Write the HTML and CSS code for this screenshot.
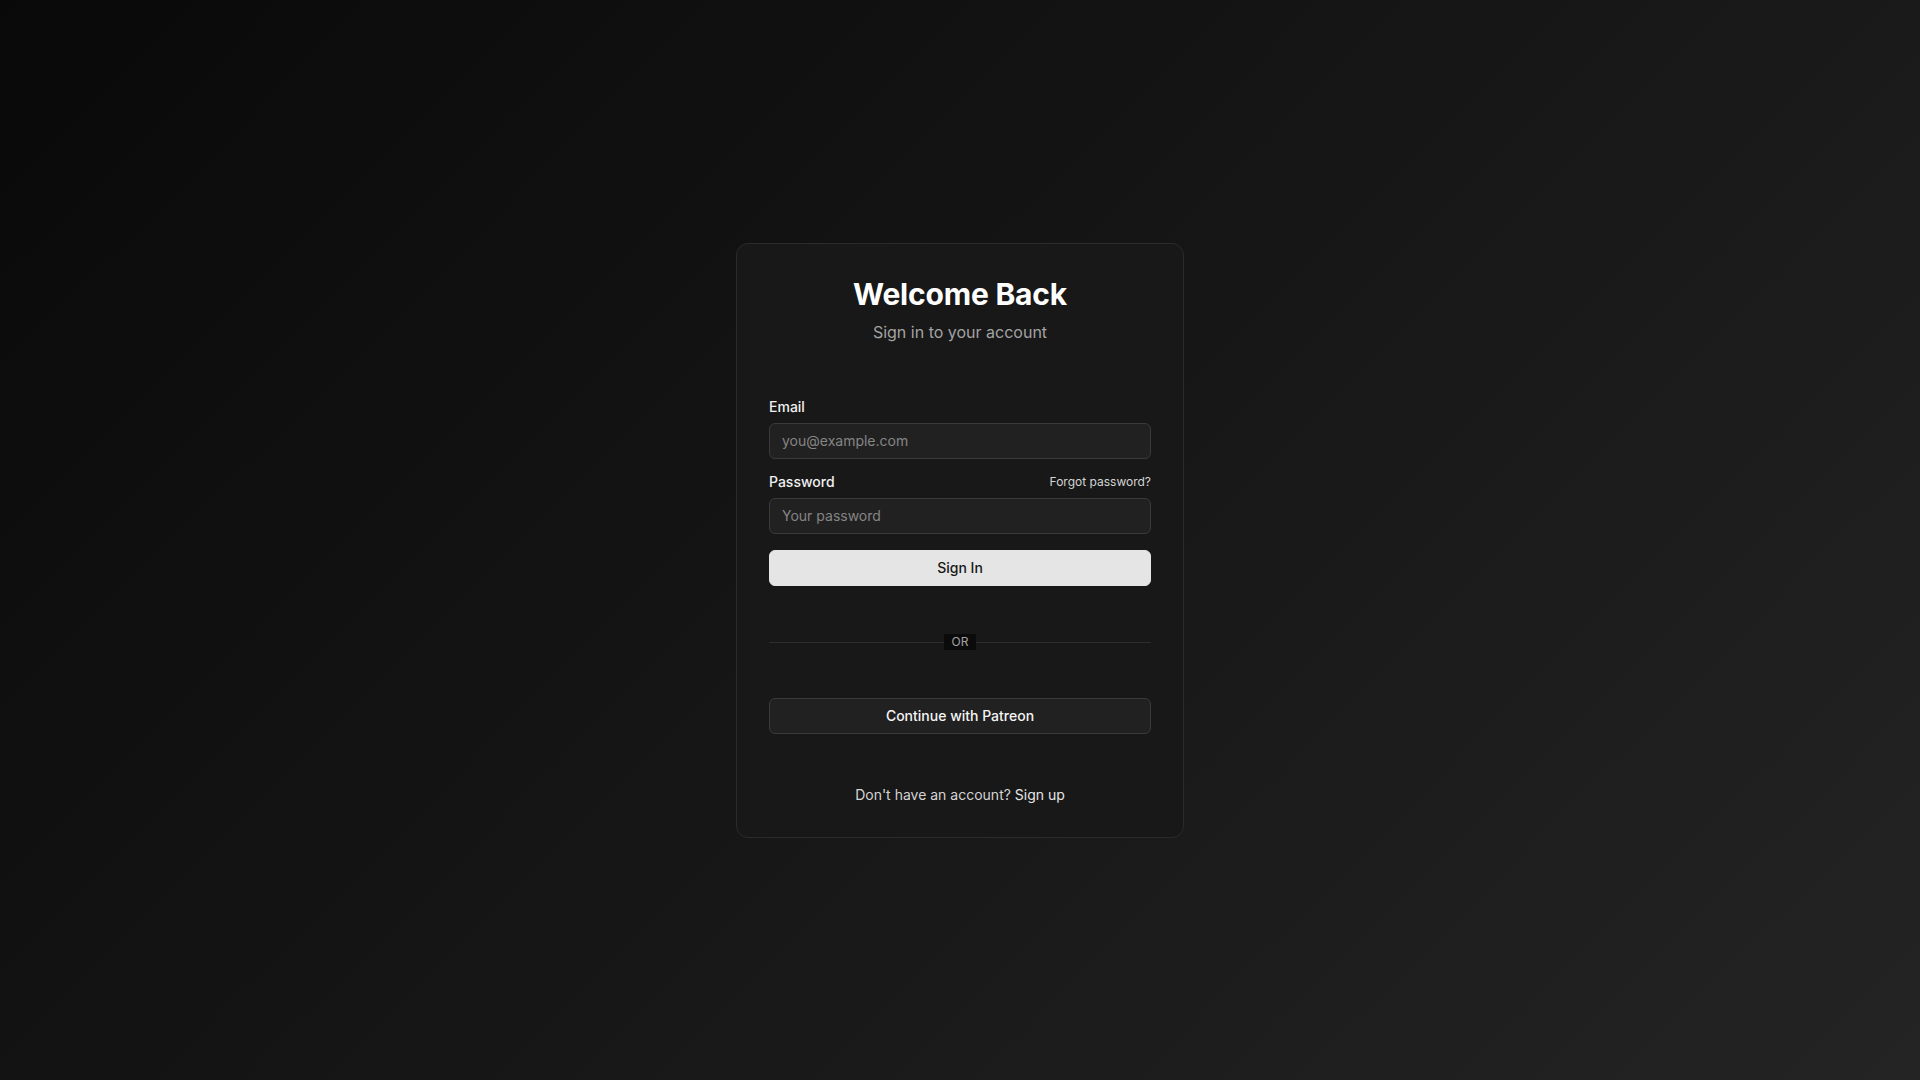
FILE: index.html
```html
<!DOCTYPE html>
<html lang="en">
<head>
<meta charset="utf-8">
<title>Sign In</title>
<link rel="stylesheet" href="styles.css">
</head>
<body>
<main class="page">
  <section class="card">
    <header class="card-header">
      <h1 class="title">Welcome Back</h1>
      <p class="subtitle">Sign in to your account</p>
    </header>
    <form class="form">
      <div class="field field-email">
        <label class="label" for="email">Email</label>
        <input class="input" id="email" type="email" placeholder="you@example.com">
      </div>
      <div class="field">
        <div class="label-row">
          <label class="label" for="password">Password</label>
          <a class="forgot" href="#">Forgot password?</a>
        </div>
        <input class="input" id="password" type="password" placeholder="Your password">
      </div>
      <button class="btn btn-primary" type="button">Sign In</button>
    </form>
    <div class="divider"><span class="divider-text">OR</span></div>
    <button class="btn btn-secondary" type="button">Continue with Patreon</button>
    <p class="footer-text">Don't have an account? <a class="link" href="#">Sign up</a></p>
  </section>
</main>
</body>
</html>
```
FILE: styles.css
```css
* { box-sizing: border-box; }
html, body { margin: 0; padding: 0; }
body {
  font-family: "Inter", "Liberation Sans", sans-serif;
  background: linear-gradient(135deg, #090909 0%, #161616 50%, #242424 100%);
  color: #f5f5f5;
  min-height: 100vh;
}
.page {
  min-height: 100vh;
  display: flex;
  align-items: center;
  justify-content: center;
}
.card {
  width: 448px;
  background: #181818;
  border: 1px solid #2b2b2b;
  border-radius: 12px;
  padding: 32px;
  display: flex;
  flex-direction: column;
}
.card-header { text-align: center; }
.title {
  margin: 0;
  font-size: 30px;
  line-height: 36px;
  font-weight: 700;
  color: #ffffff;
  letter-spacing: -0.2px;
}
.subtitle {
  margin: 8px 0 0;
  font-size: 16px;
  line-height: 24px;
  color: #a3a3a3;
}
.form {
  margin-top: 53px;
  display: flex;
  flex-direction: column;
}
.field { display: flex; flex-direction: column; }
.field-email { margin-bottom: 13px; }
.label-row {
  display: flex;
  justify-content: space-between;
  align-items: center;
}
.label {
  font-size: 14px;
  line-height: 20px;
  font-weight: 500;
  color: #f0f0f0;
  margin-bottom: 6px;
}
.forgot {
  font-size: 12px;
  line-height: 20px;
  color: #d4d4d4;
  text-decoration: none;
  margin-bottom: 6px;
}
.input {
  height: 36px;
  width: 100%;
  background: #212121;
  border: 1px solid #3a3a3a;
  border-radius: 6px;
  padding: 0 12px;
  font-family: inherit;
  font-size: 14px;
  color: #f5f5f5;
  outline: none;
}
.input::placeholder { color: #858585; }
.btn {
  width: 100%;
  height: 36px;
  border-radius: 6px;
  font-family: inherit;
  font-size: 14px;
  font-weight: 500;
  cursor: pointer;
}
.btn-primary {
  margin-top: 16px;
  background: #e5e5e5;
  color: #171717;
  border: 1px solid #e5e5e5;
}
.btn-secondary {
  background: #212121;
  color: #f5f5f5;
  border: 1px solid #3a3a3a;
}
.divider {
  margin: 48px 0;
  height: 16px;
  display: flex;
  align-items: center;
  justify-content: center;
  position: relative;
}
.divider::before {
  content: "";
  position: absolute;
  left: 0;
  right: 0;
  top: 50%;
  border-top: 1px solid #2e2e2e;
}
.divider-text {
  position: relative;
  background: #0b0b0b;
  color: #a3a3a3;
  font-size: 12px;
  line-height: 16px;
  padding: 0 8px;
}
.footer-text {
  margin: 51px 0 0;
  text-align: center;
  font-size: 14px;
  line-height: 20px;
  color: #d4d4d4;
}
.link { color: #e5e5e5; text-decoration: none; }
```
